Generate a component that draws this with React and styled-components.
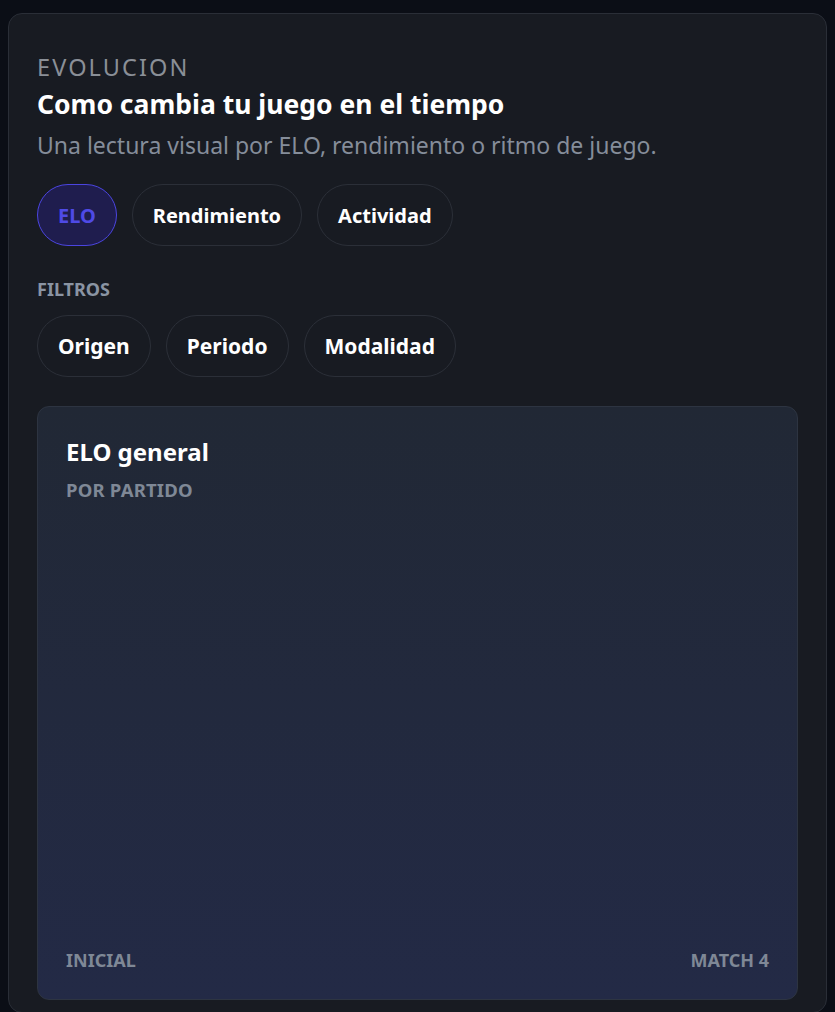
import React, { useState } from "react";
import styled, { createGlobalStyle } from "styled-components";

const Global = createGlobalStyle`
  html, body { background: #0b0e16; }
  body {
    margin: 0;
    padding: 13px 8px 0;
    font-family: "Noto Sans", "Open Sans", sans-serif;
    color: #f3f5f9;
  }
  * { box-sizing: border-box; }
`;

const Panel = styled.section`
  background: #181b22;
  border: 1px solid #2a2e37;
  border-radius: 14px;
  padding: 38px 28px 12px;
  min-height: 1000px;
`;

const Eyebrow = styled.div`
  font-size: 23.5px;
  line-height: 30px;
  letter-spacing: 2.1px;
  color: #8a8f97;
  text-transform: uppercase;
`;

const Title = styled.h2`
  margin: 5px 0 0;
  font-size: 26.5px;
  line-height: 34px;
  font-weight: 700;
  color: #ffffff;
`;

const Subtitle = styled.p`
  margin: 8px 0 0;
  font-size: 23px;
  line-height: 32px;
  color: #858d9a;
`;

const PillRow = styled.div`
  display: flex;
  gap: 15px;
  margin-top: ${(p) => p.$mt || 0}px;
`;

const Pill = styled.button`
  height: 62px;
  padding: 0 20px;
  border-radius: 31px;
  font-family: inherit;
  font-size: ${(p) => p.$size || 20}px;
  font-weight: 700;
  cursor: pointer;
  background: ${(p) => (p.$active ? "#1f1d4e" : "transparent")};
  border: 1px solid ${(p) => (p.$active ? "#4b45e0" : "#2b2f38")};
  color: ${(p) => (p.$active ? "#4f4ae6" : "#ffffff")};
`;

const Label = styled.div`
  margin-top: 31px;
  font-size: 18px;
  line-height: 24px;
  font-weight: 700;
  color: #8a94a3;
`;

const Chart = styled.div`
  margin-top: 29px;
  height: 594px;
  border: 1px solid #2d3441;
  border-radius: 12px;
  background: linear-gradient(180deg, #212835 0%, #232a46 100%);
  padding: 29px 28px 27px;
  display: flex;
  flex-direction: column;
`;

const ChartTitle = styled.h3`
  margin: 0;
  font-size: 24px;
  line-height: 32px;
  font-weight: 700;
  color: #ffffff;
`;

const ChartSub = styled.div`
  margin-top: 10px;
  font-size: 18.5px;
  line-height: 24px;
  font-weight: 700;
  color: #7f8896;
  letter-spacing: 0.2px;
`;

const Plot = styled.div`
  flex: 1;
`;

const Axis = styled.div`
  display: flex;
  justify-content: space-between;
  font-size: 18px;
  line-height: 24px;
  font-weight: 700;
  color: #7f8896;
`;

export default function App() {
  const [tab, setTab] = useState("ELO");
  return (
    <>
      <Global />
      <Panel>
        <Eyebrow>Evolucion</Eyebrow>
        <Title>Como cambia tu juego en el tiempo</Title>
        <Subtitle>Una lectura visual por ELO, rendimiento o ritmo de juego.</Subtitle>
        <PillRow $mt={23}>
          {["ELO", "Rendimiento", "Actividad"].map((t) => (
            <Pill key={t} $active={tab === t} onClick={() => setTab(t)}>
              {t}
            </Pill>
          ))}
        </PillRow>
        <Label>FILTROS</Label>
        <PillRow $mt={14}>
          {["Origen", "Periodo", "Modalidad"].map((t) => (
            <Pill key={t} $size={21}>
              {t}
            </Pill>
          ))}
        </PillRow>
        <Chart>
          <ChartTitle>ELO general</ChartTitle>
          <ChartSub>POR PARTIDO</ChartSub>
          <Plot />
          <Axis>
            <span>INICIAL</span>
            <span>MATCH 4</span>
          </Axis>
        </Chart>
      </Panel>
    </>
  );
}
